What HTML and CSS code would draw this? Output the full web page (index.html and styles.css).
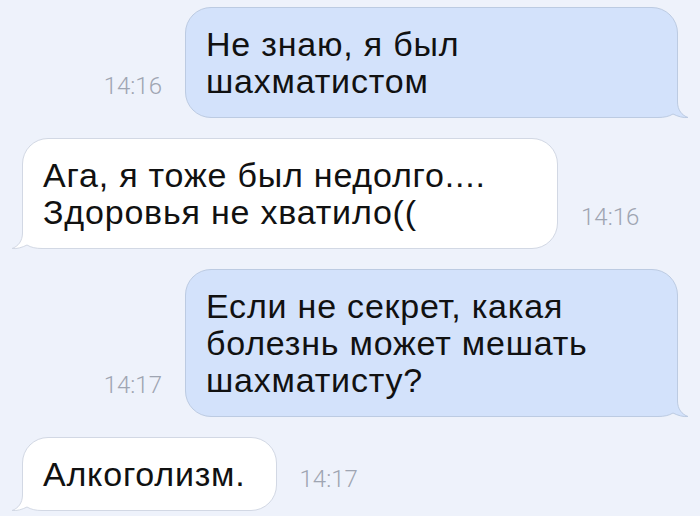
FILE: index.html
```html
<!DOCTYPE html>
<html lang="ru">
<head>
    <meta charset="UTF-8">
    <meta name="viewport" content="width=device-width, initial-scale=1.0">
    <title>Переписка</title>
    <link rel="stylesheet" href="styles.css">
</head>
<body>
    <div class="chat">
        <div class="row row-out">
            <span class="time">14:16</span>
            <div class="bubble bubble-out">
                Не знаю, я был<br>шахматистом
                <svg class="tail" width="36" height="30" viewBox="0 0 36 30">
                    <path class="tail-fill" d="M0 22 L25.5 0 L25.5 14 C25.5 22 30 27.5 36 29.5 C31 30 26 28.5 21 26 C17 28.5 12 29.5 6 29.5 L0 29.5 Z"/>
                    <path class="tail-line" d="M25.5 0 L25.5 14 C25.5 22 30 27.5 36 29.5 C31 30 26 28.5 21 26 C17 28.5 12 29.5 6 29.5 L0 29.5"/>
                </svg>
            </div>
        </div>

        <div class="row row-in">
            <div class="bubble bubble-in bubble-long">
                Ага, я тоже был недолго....<br>Здоровья не хватило((
                <svg class="tail" width="36" height="30" viewBox="0 0 36 30">
                    <path class="tail-fill" d="M0 22 L25.5 0 L25.5 14 C25.5 22 30 27.5 36 29.5 C31 30 26 28.5 21 26 C17 28.5 12 29.5 6 29.5 L0 29.5 Z"/>
                    <path class="tail-line" d="M25.5 0 L25.5 14 C25.5 22 30 27.5 36 29.5 C31 30 26 28.5 21 26 C17 28.5 12 29.5 6 29.5 L0 29.5"/>
                </svg>
            </div>
            <span class="time">14:16</span>
        </div>

        <div class="row row-out">
            <span class="time">14:17</span>
            <div class="bubble bubble-out">
                Если не секрет, какая<br>болезнь может мешать<br>шахматисту?
                <svg class="tail" width="36" height="30" viewBox="0 0 36 30">
                    <path class="tail-fill" d="M0 22 L25.5 0 L25.5 14 C25.5 22 30 27.5 36 29.5 C31 30 26 28.5 21 26 C17 28.5 12 29.5 6 29.5 L0 29.5 Z"/>
                    <path class="tail-line" d="M25.5 0 L25.5 14 C25.5 22 30 27.5 36 29.5 C31 30 26 28.5 21 26 C17 28.5 12 29.5 6 29.5 L0 29.5"/>
                </svg>
            </div>
        </div>

        <div class="row row-in">
            <div class="bubble bubble-in">
                Алкоголизм.
                <svg class="tail" width="36" height="30" viewBox="0 0 36 30">
                    <path class="tail-fill" d="M0 22 L25.5 0 L25.5 14 C25.5 22 30 27.5 36 29.5 C31 30 26 28.5 21 26 C17 28.5 12 29.5 6 29.5 L0 29.5 Z"/>
                    <path class="tail-line" d="M25.5 0 L25.5 14 C25.5 22 30 27.5 36 29.5 C31 30 26 28.5 21 26 C17 28.5 12 29.5 6 29.5 L0 29.5"/>
                </svg>
            </div>
            <span class="time">14:17</span>
        </div>
    </div>
</body>
</html>
```

FILE: styles.css
```css
body {
    margin: 0;
    background-color: #eef2fb;
    font-family: "Liberation Sans", Arial, sans-serif;
    color: #111;
}
.chat {
    display: flex;
    flex-direction: column;
    gap: 20px;
    padding: 7px 22px 0 22px;
}
.row {
    display: flex;
    align-items: flex-end;
    gap: 23px;
}
.row-out {
    justify-content: flex-end;
}
.time {
    font-family: Roboto, "Liberation Sans", sans-serif;
    font-weight: 300;
    font-size: 24px;
    line-height: 24px;
    color: #9fa5b2;
    margin-bottom: 20px;
}
.bubble {
    position: relative;
    box-sizing: border-box;
    font-size: 34px;
    letter-spacing: 0.8px;
    line-height: 37px;
    padding: 18px 30px 17px 20px;
    border: 1px solid;
    border-radius: 26px;
}
.bubble-out {
    width: 493px;
    background-color: #d3e2fb;
    border-color: #bccbe2;
}
.bubble-in {
    background-color: #fff;
    border-color: #d2d8e4;
}
.bubble-long {
    width: 536px;
}

/* хвостик пузыря */
.tail {
    position: absolute;
    bottom: -1px;
    right: -11px;
    overflow: visible;
}
.bubble-in .tail {
    right: auto;
    left: -11px;
    transform: scaleX(-1);
}
.tail-line {
    fill: none;
    stroke-width: 1;
}
.bubble-out .tail-fill { fill: #d3e2fb; }
.bubble-out .tail-line { stroke: #bccbe2; }
.bubble-in .tail-fill { fill: #fff; }
.bubble-in .tail-line { stroke: #d2d8e4; }
```
